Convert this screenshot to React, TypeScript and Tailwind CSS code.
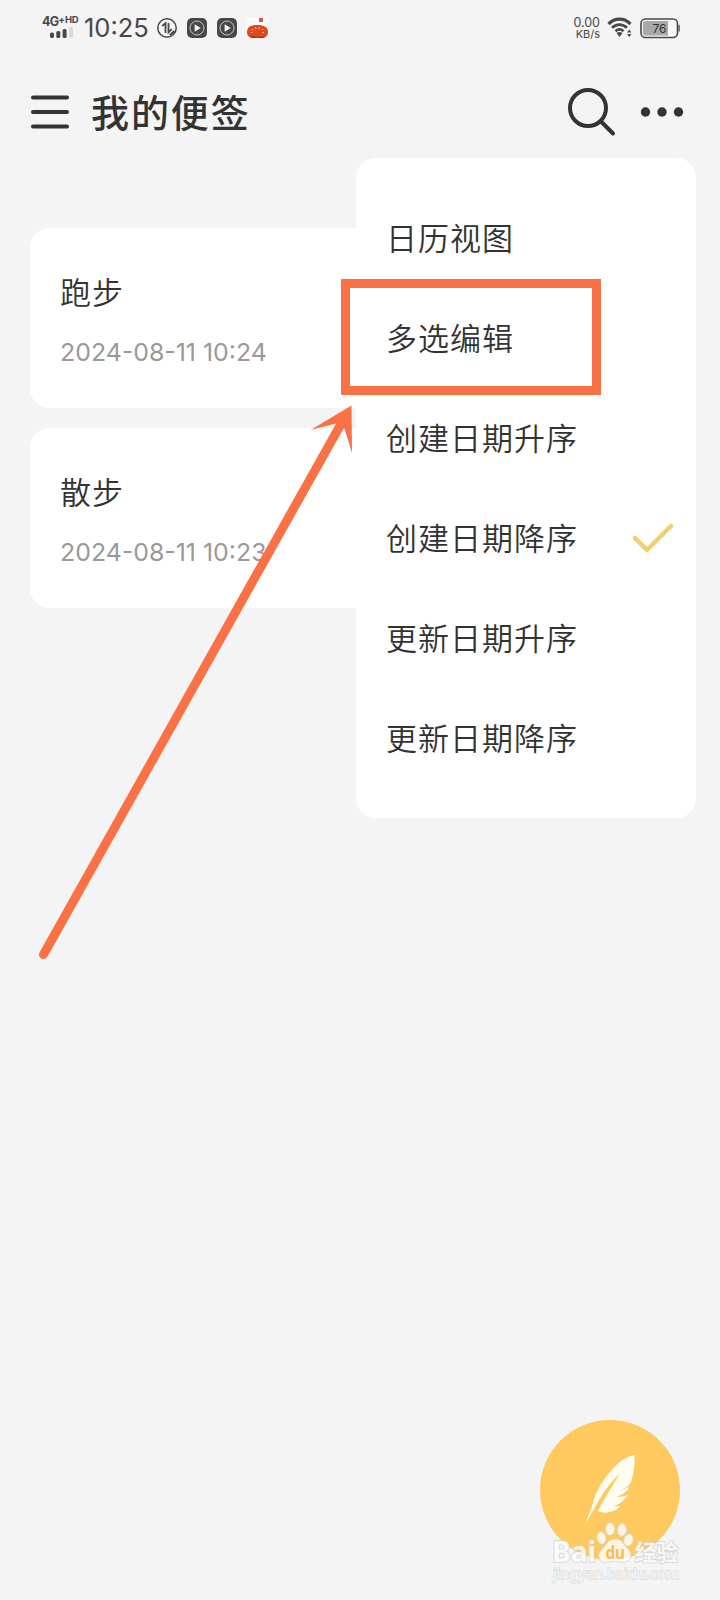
import React from 'react';

const notes = [
  { title: '跑步', date: '2024-08-11 10:24' },
  { title: '散步', date: '2024-08-11 10:23' },
];

const menuItems = [
  { label: '日历视图' },
  { label: '多选编辑' },
  { label: '创建日期升序' },
  { label: '创建日期降序', checked: true },
  { label: '更新日期升序' },
  { label: '更新日期降序' },
];

function PlayBadge() {
  return (
    <svg width="20" height="20" viewBox="0 0 20 20">
      <rect width="20" height="20" rx="5" fill="#484848" />
      <circle cx="10" cy="10" r="7" fill="none" stroke="#c5c5c5" strokeWidth="1" />
      <path d="M7.6 6.2 13.8 10 7.6 13.8Z" fill="#f3f3f3" />
    </svg>
  );
}

function StatusBar() {
  return (
    <div className="flex h-14 items-center pl-[42px] pr-[40px] text-[#484848]">
      <div className="flex h-[26px] w-[38px] flex-col">
        <div className="flex h-[12px] items-start whitespace-nowrap font-bold leading-none">
          <span className="text-[12.5px] leading-[14px] tracking-[-0.8px]">4G</span>
          <span className="text-[10px] leading-[8px]">+</span>
          <span className="text-[9.5px] leading-[10px] tracking-[-0.3px]">HD</span>
        </div>
        <svg className="ml-2" width="24" height="12" viewBox="0 0 24 12">
          <rect x="0" y="5.5" width="4" height="5.5" rx="1.5" fill="#484848" />
          <rect x="6.3" y="4" width="4" height="7" rx="1.5" fill="#484848" />
          <rect x="12.6" y="2" width="4" height="9" rx="1.5" fill="#484848" />
          <rect x="19" y="0" width="4" height="11" rx="1.5" fill="#dadada" />
        </svg>
      </div>
      <span className="w-[77px] pl-1 text-[25.5px] leading-none">10:25</span>
      <div className="flex items-center gap-[10px]">
        <svg width="20" height="20" viewBox="0 0 20 20" fill="none" stroke="#484848" strokeWidth="1.500">
          <circle cx="10" cy="10" r="9.200" />
          <path d="M5.200 8 8.500 5.200V15M11.500 5V14.300L14.800 11.200" strokeWidth="1.800" />
          <path d="M13 17 17.500 13" strokeWidth="2.200" />
        </svg>
        <PlayBadge />
        <PlayBadge />
        <svg width="22" height="22" viewBox="0 0 22 22">
          <rect width="21" height="12" x="0" y="0" fill="#fafafa" />
          <rect x="12" y="1" width="4" height="4" fill="#c46248" />
          <path d="M0 15C0 10 4 8 10.500 8S21 10 21 15C21 19 18 21 15 21H6C3 21 0 19 0 15Z" fill="#dc4a20" />
          <path d="M2 18.500C7 20 14 20 19 18.500L15 21H6Z" fill="#b82c12" />
          <path d="M5 12l1 1M8.500 10.500l.6 1.500M12.500 10.500l-.4 1.500M16 12l-1 1M4 15.500h1.500M15.500 15.500h1.500" stroke="#ffd5a8" strokeWidth="1" />
        </svg>
      </div>
      <div className="ml-auto flex items-center">
        <div className="flex w-[28px] flex-col items-end leading-[10.500px]">
          <span className="pt-px text-[12.5px]">0.00</span>
          <span className="text-[11px]">KB/s</span>
        </div>
        <svg className="ml-[7px]" width="26" height="22" viewBox="0 0 26 22" fill="none" stroke="#484848">
          <path d="M1.500 7C8 .6 17 .6 23.500 7" strokeWidth="3.200" />
          <path d="M5 10.700C9.500 6.500 15.500 6.500 20 10.700" strokeWidth="2.800" />
          <path d="M8.500 14.300C11 12 14 12 16.500 14.300" strokeWidth="2.600" />
          <path d="M9.500 16C11.500 14.700 13.500 14.700 15.500 16L12.500 20Z" fill="#484848" stroke="none" />
          <path d="M20 15.500 22.300 12.500 24.500 15.500ZM20 17 22.300 20 24.500 17Z" fill="#484848" stroke="none" />
        </svg>
        <svg className="ml-[7px] mr-[-1px]" width="41" height="21" viewBox="0 0 41 21">
          <rect x="1" y="1" width="36.500" height="18.500" rx="4.500" fill="#f8f8f8" stroke="#484848" strokeWidth="1.600" />
          <path d="M5.500 3H28V17.500H5.500A2.500 2.500 0 0 1 3 15V5.500A2.500 2.500 0 0 1 5.500 3Z" fill="#a9a9a9" />
          <rect x="38.500" y="7" width="1.200" height="6.500" fill="#484848" />
          <text x="19.500" y="14.700" fontSize="12" textAnchor="middle" fill="#333">76</text>
        </svg>
      </div>
    </div>
  );
}

function Header() {
  return (
    <header className="flex h-[112px] items-center pl-[31px] pr-9">
      <svg width="38" height="34" viewBox="0 0 38 34" stroke="#333" strokeWidth="4" strokeLinecap="round">
        <path d="M2 2.500H36M2 17H36M2 31.500H36" />
      </svg>
      <h1 className="pl-[22px] pt-[2px] text-[38px] font-medium leading-none tracking-[1.900px] text-[#333]">我的便签</h1>
      <svg className="ml-auto" width="50" height="50" viewBox="0 0 50 50" fill="none" stroke="#333" strokeWidth="4">
        <circle cx="21" cy="21" r="18" />
        <path d="M34 34.500 46 46.500" strokeLinecap="round" />
      </svg>
      <svg className="ml-[23px]" width="44" height="10" viewBox="0 0 44 10" fill="#333">
        <circle cx="5.500" cy="5" r="4.700" />
        <circle cx="22" cy="5" r="4.700" />
        <circle cx="38.500" cy="5" r="4.700" />
      </svg>
    </header>
  );
}

function Menu() {
  return (
    <div className="absolute left-[356px] top-[158px] flex h-[660px] w-[340px] flex-col rounded-[20px] bg-white pl-[30px] pr-[21px] pt-8">
      {menuItems.map((item) => (
        <div key={item.label} className="flex h-[100px] items-center justify-between text-[31px] font-[350] leading-none tracking-[1px] text-[#333]">
          <span className="pb-[3px]">{item.label}</span>
          {item.checked && (
            <svg className="mb-[2px]" width="44" height="32" viewBox="0 0 44 32" fill="none" stroke="#f0d070" strokeWidth="4.500" strokeLinecap="round" strokeLinejoin="round">
              <path d="M4 15 16 27 40 3" />
            </svg>
          )}
        </div>
      ))}
    </div>
  );
}

function Annotation() {
  return (
    <>
      <div className="absolute left-[341px] top-[279px] h-[116px] w-[260px] border-[9px] border-[#f97144]" />
      <svg className="absolute left-[30px] top-[400px]" width="330" height="570" viewBox="30 400 330 570">
        <path d="M43.500 954.500 341 424" stroke="#f97144" strokeWidth="9" strokeLinecap="round" />
        <path d="M351.500 405.500 310.500 430 336 423.500 344.500 428.500 352 453Z" fill="#f97144" />
      </svg>
    </>
  );
}

function ComposeButton() {
  return (
    <div className="absolute left-[540px] top-[1420px] size-[140px] rounded-full bg-[#fec95e]">
      <svg width="140" height="140" viewBox="0 0 140 140">
        <path d="M94.500 35C82 37 71 49 63 61.500C57 70 54 77 53 83C51 90 47 98 45 105C48 99 52 92 56 85.500C62 74 70 63 79.500 54C73 65 65 77 58 91C63 93.500 72 94 80 86.500L74 86C80 84 85 80 87.500 75C84 76.500 80 77 76 77C82 75 87 72 89.500 67L80 70.500C86 68 90 65 91 62C94 53 95 44 94.500 35Z" fill="#fffdf0" />
      </svg>
    </div>
  );
}

function Watermark() {
  return (
    <svg className="absolute left-[545px] top-[1518px] font-['Noto_Sans','Noto_Sans_CJK_SC',sans-serif]" width="150" height="76" viewBox="545 1518 150 76">
      <g fill="#fff" fillOpacity=".8" stroke="#cfcfcf" strokeOpacity=".7" strokeWidth="1">
        <text x="552" y="1561.500" fontSize="28" fontWeight="700" textLength="44" lengthAdjust="spacingAndGlyphs" strokeWidth="1.800" paintOrder="stroke">Bai</text>
        <ellipse cx="601.500" cy="1538" rx="4.600" ry="6.300" transform="rotate(-12 601.5 1538)" />
        <ellipse cx="610" cy="1529" rx="4.700" ry="6.500" />
        <ellipse cx="622" cy="1530" rx="4.700" ry="6.500" transform="rotate(8 622 1530)" />
        <ellipse cx="628.500" cy="1540" rx="4.700" ry="6.300" transform="rotate(18 628.5 1540)" />
        <path d="M615 1539C624 1539 624 1546 628 1549C635 1556 629 1563 621 1562C617 1561 613 1561 609 1562C600 1564 595 1556 602 1549C607 1545 607 1539 615 1539Z" />
        <text x="635" y="1560" fontSize="22" fontWeight="700" textLength="43" lengthAdjust="spacingAndGlyphs" strokeWidth="1.800" paintOrder="stroke">经验</text>
      </g>
      <text x="605.500" y="1559" fontSize="18" fontWeight="700" fill="#f4bd5d" textLength="19.500" lengthAdjust="spacingAndGlyphs">du</text>
      <text x="553" y="1578.500" fontSize="15" fill="#f8f8f8" stroke="#d9d9d9" strokeWidth="1.300" paintOrder="stroke" textLength="126" lengthAdjust="spacingAndGlyphs">jingyan.baidu.com</text>
    </svg>
  );
}

export default function App() {
  return (
    <div className="relative h-[1600px] w-[720px] overflow-hidden bg-[#f4f4f4] font-['Inter','Noto_Sans_CJK_SC',sans-serif]">
      <StatusBar />
      <Header />
      <main className="flex flex-col gap-5 px-[30px] pt-[60px]">
        {notes.map((note) => (
          <article key={note.title} className="flex h-[180px] flex-col rounded-[20px] bg-white px-[30px] pt-[49px]">
            <h2 className="text-[31px] font-[350] leading-[32px] tracking-[0.9px] text-[#333]">{note.title}</h2>
            <time className="pt-[30px] text-[24.9px] leading-[26px] text-[#999]">{note.date}</time>
          </article>
        ))}
      </main>
      <Menu />
      <Annotation />
      <ComposeButton />
      <Watermark />
    </div>
  );
}
